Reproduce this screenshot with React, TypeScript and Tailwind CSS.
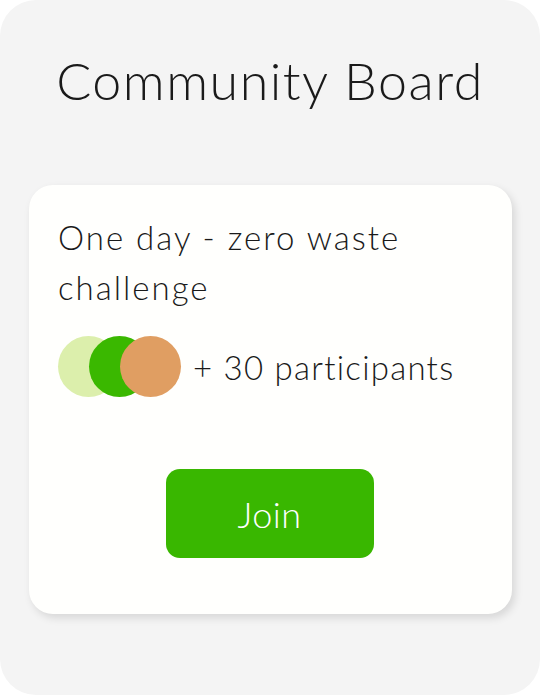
import React from "react";

export default function App() {
  return (
    <div className="w-[540px] h-[695px] bg-white">
      <div
        className="w-[540px] h-[695px] bg-[#f4f4f4] rounded-[36px] flex flex-col items-center text-[#1a1a1a]"
        style={{ fontFamily: "Lato, 'Open Sans', sans-serif" }}
      >
        <h1 className="mt-[50px] h-[60px] text-[52px] leading-[60px] font-light tracking-[1.5px]">
          Community Board
        </h1>
        <div className="self-start mt-[75px] ml-[29px] w-[483px] h-[429px] bg-[#fffffd] rounded-[24px] shadow-[3px_4px_8px_rgba(0,0,0,0.12)] px-[29px] pt-[27px] flex flex-col">
          <p className="text-[33px] leading-[50px] w-[420px] tracking-[2px] font-light">One day - zero waste challenge</p>
          <div className="mt-[24px] flex items-center">
            <div className="flex">
              <div className="w-[61px] h-[61px] rounded-full bg-[#dcefac]" />
              <div className="w-[61px] h-[61px] rounded-full bg-[#3ab800] ml-[-30px]" />
              <div className="w-[61px] h-[61px] rounded-full bg-[#e09e62] ml-[-30px]" />
            </div>
            <span className="ml-[12px] text-[33px] leading-[40px] tracking-[1.25px] font-light">+ 30 participants</span>
          </div>
          <div className="mt-[72px] flex justify-center pr-[2px]">
            <button className="w-[208px] h-[89px] rounded-[14px] bg-[#39b700] text-white text-[36px] font-light tracking-[0.5px]">
              Join
            </button>
          </div>
        </div>
      </div>
    </div>
  );
}
